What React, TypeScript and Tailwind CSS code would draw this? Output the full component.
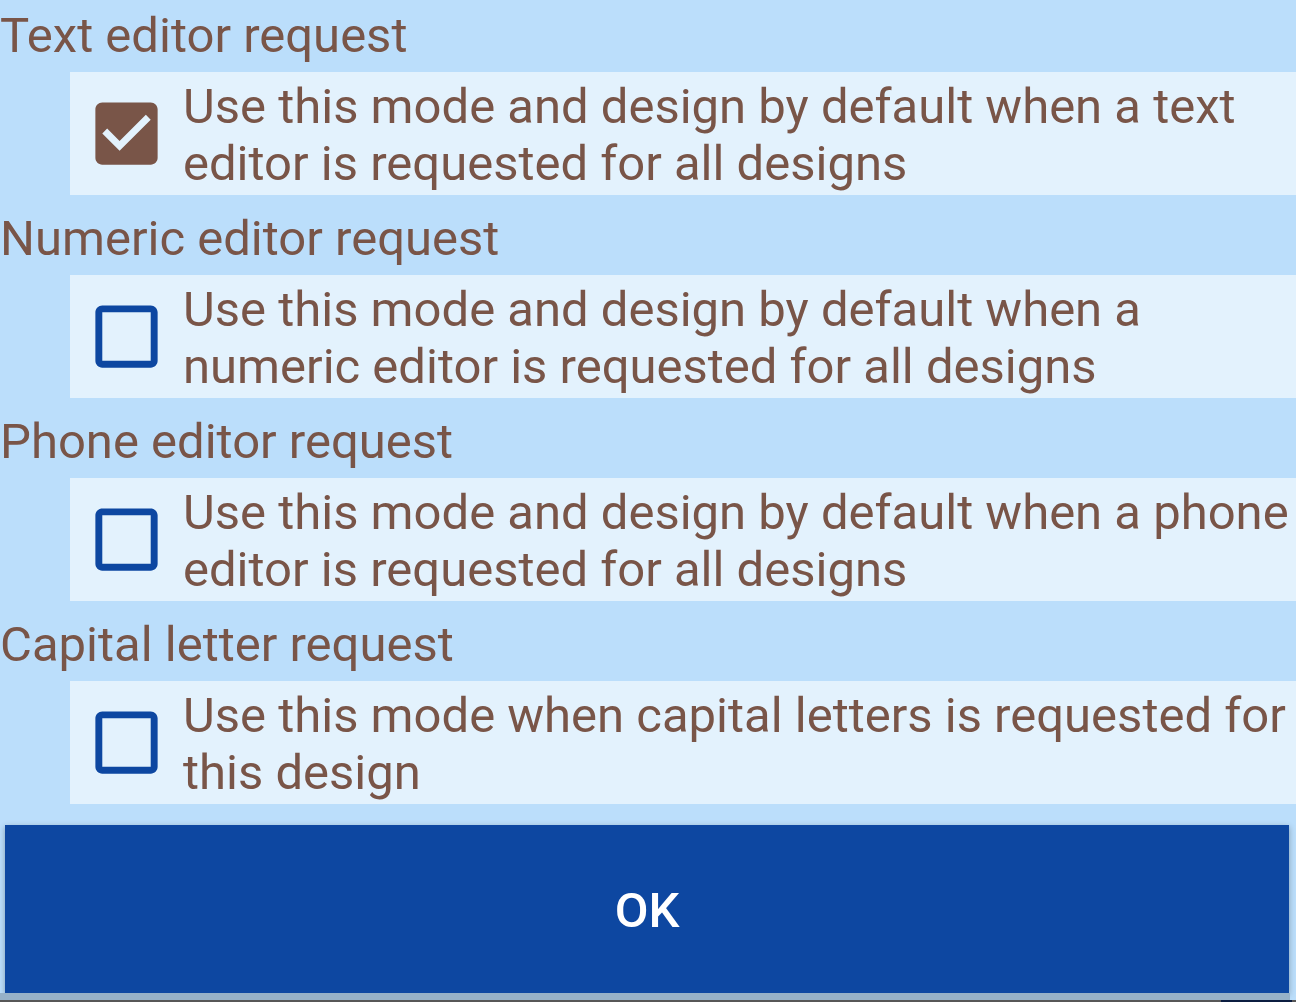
import React from "react";

const sections = [
  {
    title: "Text editor request",
    text: "Use this mode and design by default when a text editor is requested for all designs",
    checked: true,
  },
  {
    title: "Numeric editor request",
    text: "Use this mode and design by default when a numeric editor is requested for all designs",
    checked: false,
  },
  {
    title: "Phone editor request",
    text: "Use this mode and design by default when a phone editor is requested for all designs",
    checked: false,
  },
  {
    title: "Capital letter request",
    text: "Use this mode when capital letters is requested for this design",
    checked: false,
  },
];

function CheckIcon({ checked }: { checked: boolean }) {
  if (checked) {
    return (
      <svg viewBox="0 0 24 24" width="83" height="83" className="shrink-0">
        <path
          fill="#795548"
          d="M19 3H5c-1.11 0-2 .9-2 2v14c0 1.1.89 2 2 2h14c1.11 0 2-.9 2-2V5c0-1.1-.89-2-2-2zm-9 14l-5-5 1.41-1.41L10 14.17l7.59-7.59L19 8l-9 9z"
        />
      </svg>
    );
  }
  return (
    <svg viewBox="0 0 24 24" width="83" height="83" className="shrink-0">
      <path
        fill="#0d47a1"
        d="M19 5v14H5V5h14m0-2H5c-1.1 0-2 .9-2 2v14c0 1.1.9 2 2 2h14c1.1 0 2-.9 2-2V5c0-1.1-.9-2-2-2z"
      />
    </svg>
  );
}

export default function App() {
  return (
    <div
      className="w-[1296px] h-[1002px] overflow-hidden bg-[#bbdefb] flex flex-col text-[#795548]"
      style={{ fontFamily: "Roboto, 'Noto Sans', sans-serif" }}
    >
      <div className="-mt-2 flex flex-col">
        {sections.map((s) => (
          <div key={s.title} className="flex flex-col">
            <div className="pt-[15px] pb-[8px] h-[80px] text-[49px] leading-[57px]">{s.title}</div>
            <div className="ml-[70px] h-[123px] bg-[#e3f2fd] flex items-center pl-[15px]">
              <CheckIcon checked={s.checked} />
              <div className="ml-[15px] text-[49px] leading-[57px] pr-1 pt-[3px]">{s.text}</div>
            </div>
          </div>
        ))}
      </div>
      <div className="mt-[21px] ml-[5px] mr-[7px] h-[168px] shrink-0 bg-[#0d47a1] shadow-[0_2px_6px_rgba(0,0,0,0.3)] flex items-center justify-center text-white text-[49px] font-medium pt-[3px]">
        OK
      </div>
      <div className="h-[7px] shrink-0 bg-[#96b1c8] mr-[6px]" />
      <div className="h-[2px] shrink-0 bg-[#575757] flex justify-end pr-[4px]">
        <div className="w-[71px] h-full bg-[#0b1d40]" />
      </div>
    </div>
  );
}
